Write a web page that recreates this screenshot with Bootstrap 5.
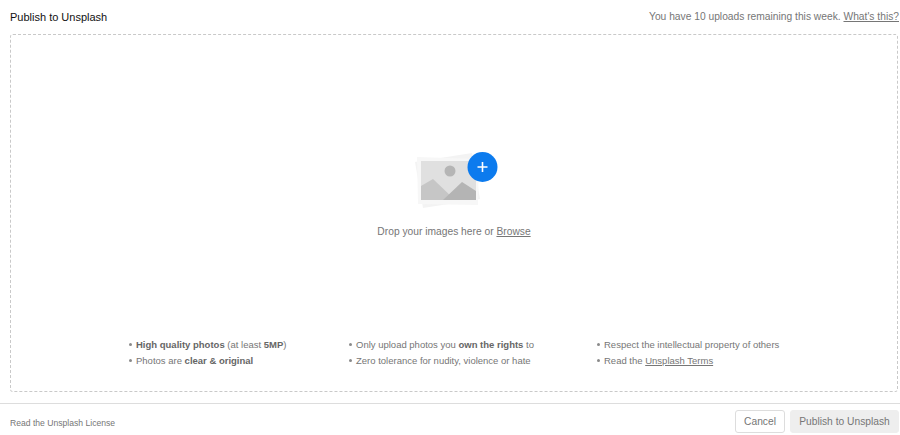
<!DOCTYPE html>
<html lang="en">
<head>
  <meta charset="UTF-8" />
  <title>Publish to Unsplash</title>
  <link href="https://cdn.jsdelivr.net/npm/bootstrap@5.3.0/dist/css/bootstrap.min.css" rel="stylesheet" />
  <style>
    html, body { height: 435px; overflow: hidden; }
    body {
      font-family: "Liberation Sans", Arial, sans-serif;
      font-size: 10.25px;
      color: #767676;
      background: #fff;
    }
    a { color: #767676; }
    .up-head { height: 34px; padding: 0 1px 0 10px; }
    .up-title { color: #111; font-size: 11px; }
    .up-drop {
      height: 358px;
      margin: 0 2px 0 10px;
      border: 1px dashed #c9c9c9;
      border-radius: 3px;
    }
    .up-center { padding-top: 114px; height: 300px; }
    .up-art { width: 88px; height: 62px; }
    .up-droptext { margin-top: 13px; }
    .up-rules { padding-left: 118px; padding-top: 2px; line-height: 16px; font-size: 9.5px; }
    .up-rules ul { list-style: none; padding: 0; margin: 0; }
    .up-rules li { padding-left: 7px; position: relative; }
    .up-rules li::before {
      content: ""; position: absolute; left: 0; top: 6px;
      width: 3px; height: 3px; border-radius: 50%; background: #8a8a8a;
    }
    .up-col1 { width: 220px; }
    .up-col2 { width: 248px; }
    .up-rules b { color: #666; }
    .up-foot {
      height: 32px;
      margin-top: 11px;
      border-top: 1px solid #ddd;
      padding: 6px 1px 0 10px;
    }
    .up-lic { font-size: 8.6px; margin-top: 7px; }
    .up-btn {
      font-size: 10.25px; height: 23px; line-height: 21px; padding: 0;
      color: #767676; border-radius: 3px; white-space: nowrap;
    }
    .up-cancel { border: 1px solid #ddd; background: #fff; margin-right: 5px; width: 50px; }
    .up-pub { border: 1px solid #eee; background: #eee; width: 109px; }
  </style>
</head>
<body>

<div class="up-head d-flex justify-content-between align-items-center">
  <div class="up-title">Publish to Unsplash</div>
  <div>You have 10 uploads remaining this week. <a href="#">What's this?</a></div>
</div>

<div class="up-drop">
  <div class="up-center text-center">
    <svg class="up-art" viewBox="0 0 88 62">
      <path d="M5 13L62 4l8 46-57 9z" fill="#f3f3f3"/>
      <path d="M7 8l62 2-1 46-60-1z" fill="#f7f7f7"/>
      <rect x="11" y="12" width="55" height="39" fill="#e0e0e0"/>
      <path d="M11 51V37l12-7 22 21z" fill="#c6c6c6"/>
      <path d="M33 51l19-18 14 9v9z" fill="#b4b4b4"/>
      <circle cx="40" cy="22" r="5.5" fill="#b5b5b5"/>
      <circle cx="72.5" cy="18" r="15" fill="#0c7bee"/>
      <path d="M72.5 13v10M67.5 18h10" stroke="#fff" stroke-width="1.6"/>
    </svg>
    <div class="up-droptext">Drop your images here or <a href="#">Browse</a></div>
  </div>
  <div class="up-rules d-flex">
    <ul class="up-col1">
      <li><b>High quality photos</b> (at least <b>5MP</b>)</li>
      <li>Photos are <b>clear &amp; original</b></li>
    </ul>
    <ul class="up-col2">
      <li>Only upload photos you <b>own the rights</b> to</li>
      <li>Zero tolerance for nudity, violence or hate</li>
    </ul>
    <ul>
      <li>Respect the intellectual property of others</li>
      <li>Read the <a href="#">Unsplash Terms</a></li>
    </ul>
  </div>
</div>

<div class="up-foot d-flex justify-content-between align-items-start">
  <div class="up-lic">Read the Unsplash License</div>
  <div class="d-flex">
    <button type="button" class="btn up-btn up-cancel">Cancel</button>
    <button type="button" class="btn up-btn up-pub">Publish to Unsplash</button>
  </div>
</div>

<script src="https://cdn.jsdelivr.net/npm/bootstrap@5.3.0/dist/js/bootstrap.bundle.min.js"></script>
</body>
</html>
